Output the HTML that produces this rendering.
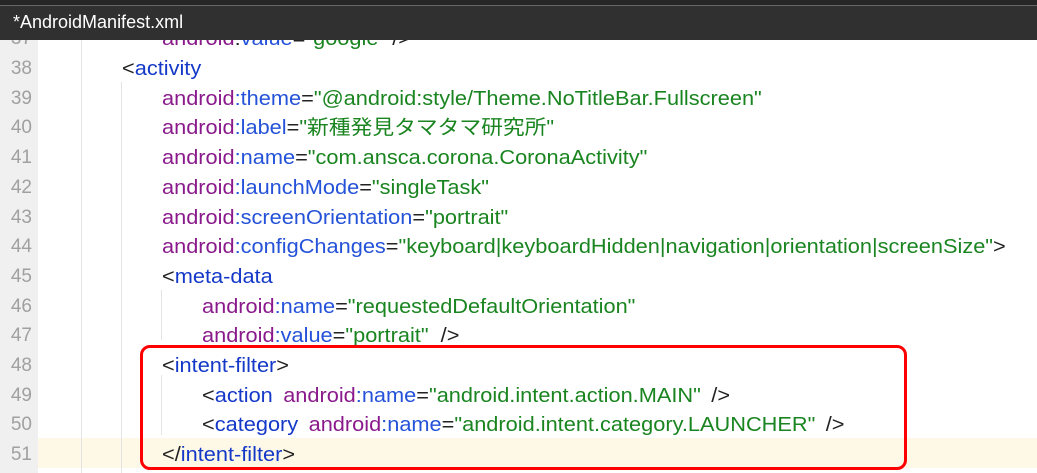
<!DOCTYPE html>
<html><head><meta charset="utf-8"><style>
body{margin:0;width:1037px;height:473px;overflow:hidden;background:#fff;position:relative;font-family:"Liberation Sans","Noto Sans CJK JP",sans-serif}
.title{position:absolute;left:0;top:0;width:1037px;height:40px;background:#303030;border-top:5px solid #262626;box-sizing:border-box;box-shadow:inset 0 1px 0 #666;z-index:5;color:#fff;font-size:18px;line-height:35px;padding-left:13px}
.gutter{position:absolute;left:0;top:0;width:38px;height:473px;background:#f0f0f0}
.hl{position:absolute;left:38px;top:438px;width:999px;height:30px;background:#fdf9e6}
.ln{position:absolute;left:0;width:32px;text-align:right;color:#a0a0a0;font-size:19px;line-height:24px;height:24px}
.code{position:absolute;white-space:pre;font-size:20px;line-height:24px;height:24px;color:#222;transform:scaleX(1.088);transform-origin:0 0}
.g{position:absolute;width:1px;background:#e4e4e4}
.t{color:#1438c8}.p{color:#8a1a8c}.a{color:#2452d8}.v{color:#1a8520}
.box{position:absolute;left:140px;top:345px;width:767px;height:125px;border:3px solid #f00;border-radius:10px;box-sizing:border-box}
.s{display:inline-block;width:4px}
</style></head><body>
<div class="gutter"></div>
<div class="hl"></div>
<div class="g" style="left:81px;top:0;height:473px"></div>
<div class="g" style="left:121px;top:82px;height:391px"></div>
<div class="g" style="left:161px;top:290px;height:50px"></div>
<div class="g" style="left:161px;top:375px;height:60px"></div>
<div id="lines"></div>
<script>
var L=[
[37,3,'<span class="p">android</span>:<span class="a">value</span>=<span class="v">"google"</span> />'],
[38,2,'&lt;<span class="t">activity</span>'],
[39,3,'<span class="p">android</span><span class="a">:theme</span>=<span class="v">"@android:style/Theme.NoTitleBar.Fullscreen"</span>'],
[40,3,'<span class="p">android</span><span class="a">:label</span>=<span class="v">"新種発見タマタマ研究所"</span>'],
[41,3,'<span class="p">android</span><span class="a">:name</span>=<span class="v">"com.ansca.corona.CoronaActivity"</span>'],
[42,3,'<span class="p">android</span><span class="a">:launchMode</span>=<span class="v">"singleTask"</span>'],
[43,3,'<span class="p">android</span><span class="a">:screenOrientation</span>=<span class="v">"portrait"</span>'],
[44,3,'<span class="p">android</span><span class="a">:configChanges</span>=<span class="v">"keyboard|keyboardHidden|navigation|orientation|screenSize"</span>&gt;'],
[45,3,'&lt;<span class="t">meta-data</span>'],
[46,4,'<span class="p">android</span><span class="a">:name</span>=<span class="v">"requestedDefaultOrientation"</span>'],
[47,4,'<span class="p">android</span><span class="a">:value</span>=<span class="v">"portrait"</span>  /&gt;'],
[48,3,'&lt;<span class="t">intent-filter</span>&gt;'],
[49,4,'&lt;<span class="t">action</span> <span class="s"></span><span class="p">android</span><span class="a">:name</span>=<span class="v">"android.intent.action.MAIN"</span> <span class="s"></span>/&gt;'],
[50,4,'&lt;<span class="t">category</span> <span class="s"></span><span class="p">android</span><span class="a">:name</span>=<span class="v">"android.intent.category.LAUNCHER"</span> <span class="s"></span>/&gt;'],
[51,3,'&lt;/<span class="t">intent-filter</span>&gt;']];
var h='';L.forEach(function(r){var top=57+(r[0]-38)*29.7;
h+='<div class="ln" style="top:'+top+'px">'+r[0]+'</div>';
h+='<div class="code" style="left:'+(122+(r[1]-2)*40)+'px;top:'+top+'px">'+r[2]+'</div>';});
document.getElementById('lines').innerHTML=h;
</script>
<div class="box"></div>
<div class="title">*AndroidManifest.xml</div>
</body></html>
